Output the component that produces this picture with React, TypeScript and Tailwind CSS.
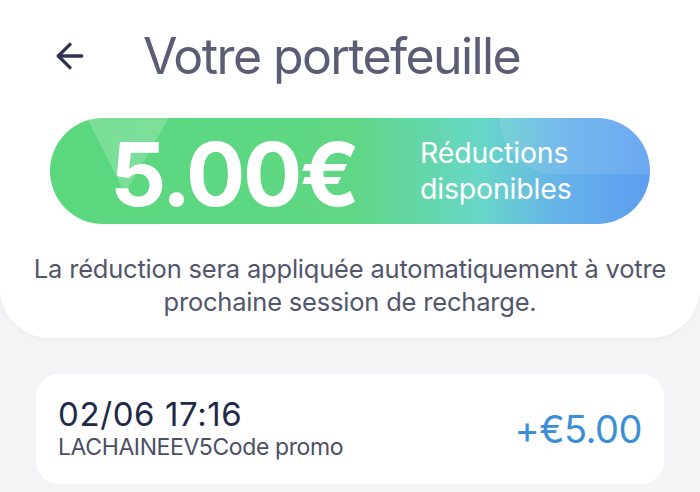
import { ArrowLeft } from "lucide-react";

const font = { fontFamily: "Inter, 'Noto Sans', sans-serif" };

const BalancePill = ({ amount }: { amount: string }) => {
  return (
    <div className="relative mx-[50px] mt-[34px] h-[106px] rounded-full bg-[linear-gradient(90deg,#5bd77e_0%,#5fd784_50%,#68d6c8_72%,#66b2ea_85%,#5c9ef0_100%)]">
      {/* glossy highlights */}
      <div className="absolute inset-0 overflow-hidden rounded-full">
        <div className="absolute left-[37px] top-0 h-[70px] w-[82px] bg-white/20 [clip-path:polygon(0_0,100%_0,50%_100%,43%_100%)]" />
        <div className="absolute right-0 top-0 h-[56px] w-[150px] rounded-bl-[100px] bg-white/10" />
      </div>
      <div className="relative flex h-full items-center pl-[60px]">
        <span className="mt-[6px] w-[310px] shrink-0 whitespace-nowrap text-[88px] font-bold leading-[100px] tracking-[-2.5px] text-white">
          {amount}
        </span>
        <div className="text-[28.5px] leading-[36px] tracking-[-0.2px] text-white">
          <div>Réductions</div>
          <div>disponibles</div>
        </div>
      </div>
    </div>
  );
};

const App = () => {
  return (
    <div className="h-[492px] w-[700px] overflow-hidden bg-[#f4f4f7]" style={font}>
      <div className="rounded-b-[50px] bg-white pb-[20px] pt-[28px] shadow-[0_2px_6px_rgba(0,0,0,0.03)]">
        <div className="flex items-center">
          <ArrowLeft className="ml-[50px] h-[40px] w-[40px] text-[#2f3350]" strokeWidth={2} />
          <h1 className="ml-[53px] text-[50px] font-normal leading-[56px] tracking-[-1.6px] text-[#5a5d74]">
            Votre portefeuille
          </h1>
        </div>
        <BalancePill amount="5.00€" />
        <p className="mt-[28px] text-center text-[25.5px] leading-[33px] tracking-[-0.2px] text-[#52566b]">
          La réduction sera appliquée automatiquement à votre
          <br />
          prochaine session de recharge.
        </p>
      </div>

      <div className="mx-[36px] mt-[36px] flex h-[110px] items-center justify-between rounded-[22px] bg-white px-[22px]">
        <div>
          <div className="text-[33px] leading-[34px] tracking-[0.6px] text-[#1f2a48]">02/06 17:16</div>
          <div className="mt-[2px] text-[23px] leading-[28px] tracking-[-0.4px] text-[#4b4f64]">LACHAINEEV5Code promo</div>
        </div>
        <div className="text-[38px] leading-none tracking-[-0.5px] text-[#3b8fd7]">+€5.00</div>
      </div>
    </div>
  );
};

export default App;
